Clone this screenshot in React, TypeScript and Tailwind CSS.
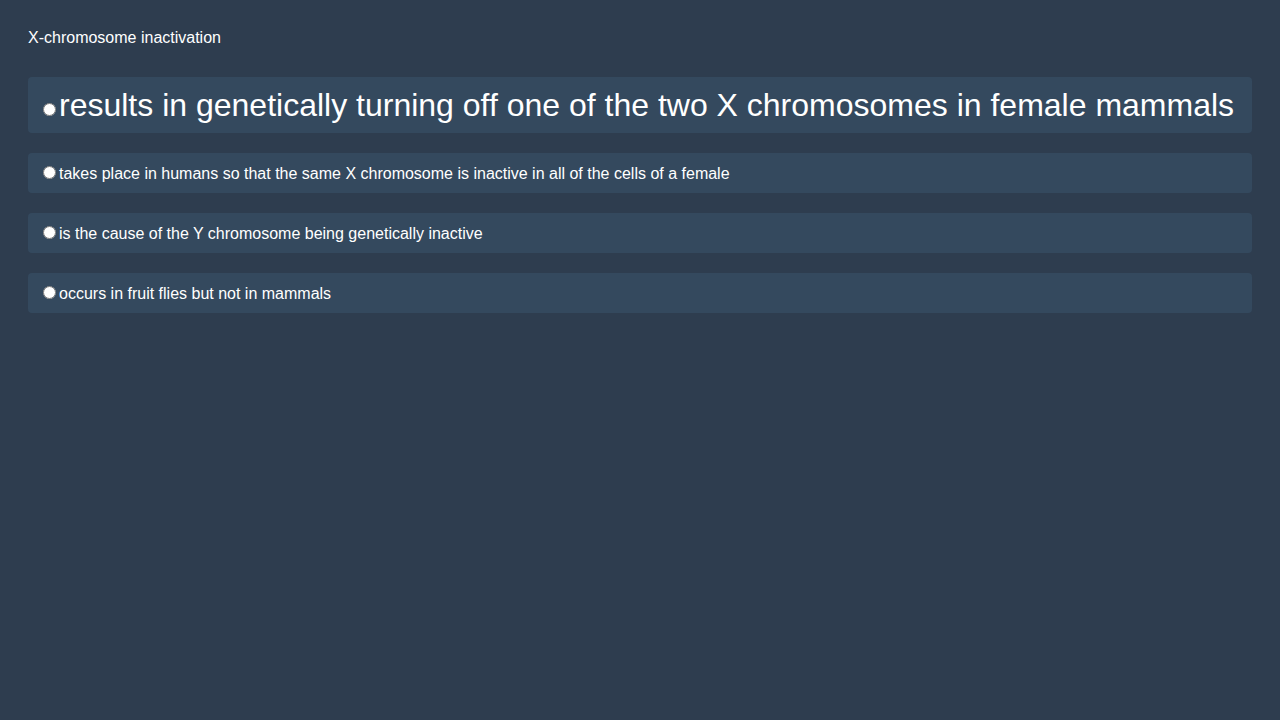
const options = [
  { text: 'results in genetically turning off one of the two X chromosomes in female mammals', big: true },
  { text: 'takes place in humans so that the same X chromosome is inactive in all of the cells of a female', big: false },
  { text: 'is the cause of the Y chromosome being genetically inactive', big: false },
  { text: 'occurs in fruit flies but not in mammals', big: false },
];

export default function App() {
  return (
    <div
      className="min-h-screen bg-[#2e3d4f] px-[28px] pt-[29px] text-white"
      style={{ fontFamily: '"Liberation Sans", Arial, sans-serif' }}
    >
      <div className="mb-[30px] text-base leading-[18px]">X-chromosome inactivation</div>
      <div className="flex flex-col gap-[20px]">
        {options.map((o, i) => (
          <label
            key={i}
            className={
              'block overflow-hidden rounded-[4px] bg-[#34495e] px-[10px] py-[10px] ' +
              (o.big ? 'h-[56px] text-[32px] leading-[36px]' : 'h-[40px] text-base leading-[20px]')
            }
          >
            <input type="radio" name="answer" className="mr-[3px] ml-[5px] mt-[3px]" />
            {o.text}
          </label>
        ))}
      </div>
    </div>
  );
}
